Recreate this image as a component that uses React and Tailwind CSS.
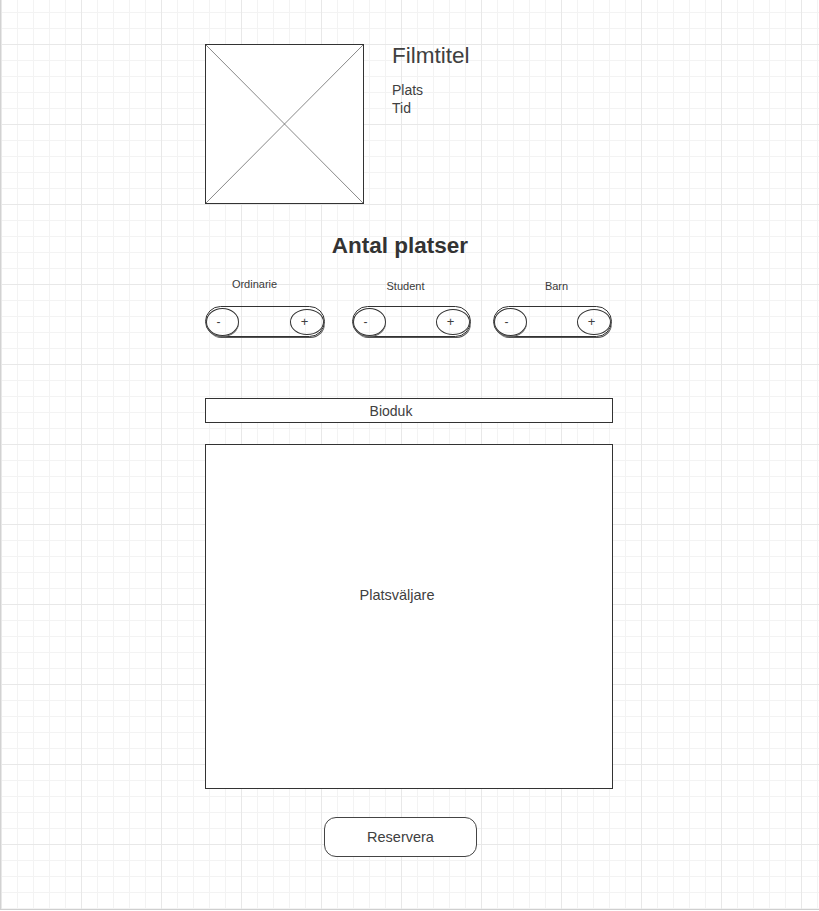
import React from "react";

function Stepper({ label, labelClass, className }) {
  return (
    <div className={"flex flex-col " + className}>
      <div className={"h-[28px] text-[11px] leading-[13px] text-center text-[#3a3a3a] " + labelClass}>{label}</div>
      <div className="flex h-[31px] w-full items-center justify-between rounded-full border border-[#333] shadow-[1px_2px_0_-1px_#555]">
        <div className="flex h-[28px] w-[33px] items-center justify-center rounded-[50%] border border-[#333] pr-[8px] text-[12px] leading-none shadow-[0_1px_0_0_#666]">
          -
        </div>
        <div className="flex h-[26px] w-[34px] items-center justify-center rounded-[50%] border border-[#333] pr-[5px] text-[13px] leading-none">
          +
        </div>
      </div>
    </div>
  );
}

export default function App() {
  return (
    <div className="w-[819px] h-[911px] bg-white font-['Liberation_Sans',Arial,sans-serif] text-[#404040]">
      <div className="h-[909px] border-l border-[#d2d2d2] bg-[linear-gradient(to_right,#e8e8e8_1px,transparent_1px),linear-gradient(to_bottom,#e8e8e8_1px,transparent_1px),linear-gradient(to_right,#f3f3f3_1px,transparent_1px),linear-gradient(to_bottom,#f3f3f3_1px,transparent_1px)] bg-size-[80px_80px,80px_80px,16px_16px,16px_16px] bg-position-[0px_44px,0px_44px,0px_12px,0px_12px]">
        <div className="flex w-[612px] flex-col pl-[204px] pt-[44px]">
          {/* header */}
          <div className="flex">
            <div className="h-[160px] w-[159px] shrink-0 border border-[#333] bg-white">
              <svg width="157" height="158" viewBox="0 0 157 158" className="block">
                <line x1="0" y1="0" x2="157" y2="158" stroke="#555" strokeWidth="0.7" />
                <line x1="157" y1="0" x2="0" y2="158" stroke="#555" strokeWidth="0.7" />
              </svg>
            </div>
            <div className="ml-[28px] flex flex-col">
              <div className="mt-[1px] text-[22.5px] leading-[22px]">Filmtitel</div>
              <div className="mt-[14px] text-[14px] leading-[18px]">Plats</div>
              <div className="text-[14px] leading-[18px]">Tid</div>
            </div>
          </div>

          <div className="mt-[31px] pr-[18px] text-center text-[22.5px] font-bold leading-[22px] text-[#333]">
            Antal platser
          </div>

          <div className="mt-[21px] flex">
            <Stepper label="Ordinarie" labelClass="pr-[21px]" className="w-[120px]" />
            <Stepper label="Student" labelClass="pt-[2px] pr-[12px]" className="ml-[27px] w-[119px]" />
            <Stepper label="Barn" labelClass="pt-[2px] pl-[8px]" className="ml-[22px] w-[119px]" />
          </div>

          <div className="mt-[61px] flex h-[25px] w-[408px] items-center justify-center border border-[#333] bg-white pr-[36px] text-[14px] leading-[16px]">
            Bioduk
          </div>

          <div className="mt-[21px] h-[345px] w-[408px] border border-[#333] bg-white pr-[24px] pt-[142px] text-center text-[14.5px] leading-[17px]">
            Platsväljare
          </div>

          <div className="ml-[119px] mt-[28px] flex h-[40px] w-[153px] items-center justify-center rounded-[12px] border border-[#444] bg-white text-[14.5px] leading-[17px]">
            Reservera
          </div>
        </div>
      </div>
      <div className="h-[1px] bg-[#cfcfcf]" />
    </div>
  );
}
